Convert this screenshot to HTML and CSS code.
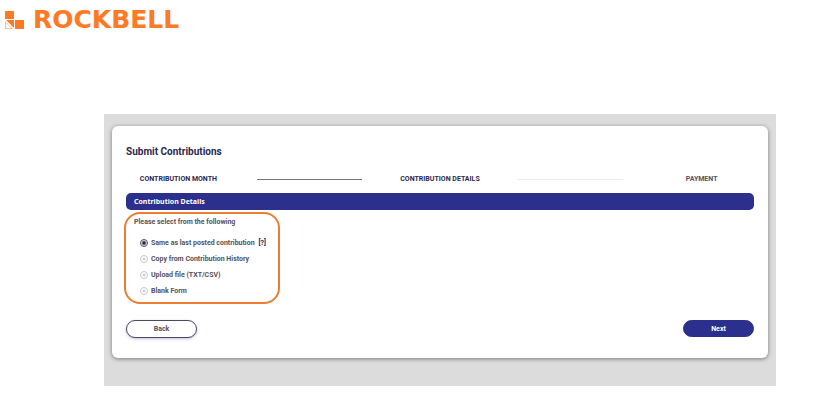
FILE: index.html
```html
<!DOCTYPE html>
<html lang="en">
<head>
    <meta charset="UTF-8">
    <meta name="viewport" content="width=device-width, initial-scale=1.0">
    <title>Submit Contributions</title>
    <link rel="stylesheet" href="styles.css">
</head>
<body>
    <header class="brand">
        <svg class="brand-mark" viewBox="0 0 19 18" aria-hidden="true">
            <path d="M0 0h9v8H0z M10 9h9v9h-9z M1 9h8v8z" fill="#ff7a24"/>
            <path d="M0 10v8h8z" fill="#ffb98c"/>
            <path d="M1 12v5h5z" fill="#fff"/>
        </svg>
        <span class="brand-name">ROCKBELL</span>
    </header>

    <main class="backdrop">
        <form class="card">
            <h1>Submit Contributions</h1>

            <!-- Progress steps -->
            <div class="steps">
                <span class="step">CONTRIBUTION MONTH</span>
                <span class="line done"></span>
                <span class="step">CONTRIBUTION DETAILS</span>
                <span class="line"></span>
                <span class="step upcoming">PAYMENT</span>
            </div>

            <h2>Contribution Details</h2>

            <!-- Source of the contribution data -->
            <fieldset class="options">
                <legend>Please select from the following</legend>
                <div class="option">
                    <input type="radio" name="source" id="same" checked>
                    <label for="same">Same as last posted contribution</label>
                    <a href="#" class="help">[?]</a>
                </div>
                <div class="option">
                    <input type="radio" name="source" id="copy">
                    <label for="copy">Copy from Contribution History</label>
                </div>
                <div class="option">
                    <input type="radio" name="source" id="upload">
                    <label for="upload">Upload file (TXT/CSV)</label>
                </div>
                <div class="option">
                    <input type="radio" name="source" id="blank">
                    <label for="blank">Blank Form</label>
                </div>
            </fieldset>

            <div class="actions">
                <button type="button" class="btn back">Back</button>
                <button type="button" class="btn next">Next</button>
            </div>
        </form>
    </main>
</body>
</html>
```
FILE: styles.css
```css
* {
    box-sizing: border-box;
}

body {
    margin: 0;
    background: #fff;
    font-family: Roboto, Arial, sans-serif;
    color: #55525c;
}

/* Logo */
.brand {
    display: flex;
    align-items: center;
    gap: 9px;
    height: 40px;
    padding-left: 5px;
}

.brand-mark {
    width: 19px;
    height: 18px;
}

.brand-name {
    font-family: "DejaVu Sans", sans-serif;
    font-size: 25px;
    line-height: 24px;
    font-weight: bold;
    color: #ff7a24;
}

/* Grey area behind the card */
.backdrop {
    margin: 74px 39px 14px 104px;
    padding: 12px 8px 28px;
    background: #dcdcdc;
}

.card {
    padding: 20px 14px;
    background: #fff;
    border-radius: 6px;
    box-shadow: 0 1px 4px rgba(0, 0, 0, 0.45);
}

h1 {
    margin: 0 0 15px;
    font-size: 10px;
    line-height: 12px;
    color: #2b2850;
}

/* Steps */
.steps {
    display: grid;
    grid-template-columns: repeat(5, 1fr);
    gap: 26px;
    align-items: center;
    margin-bottom: 8px;
}

.step {
    font-size: 7px;
    line-height: 12px;
    font-weight: bold;
    text-align: center;
    white-space: nowrap;
    color: #2b2850;
}

.step.upcoming {
    color: #55525c;
}

.line {
    height: 1px;
    background: #ececec;
}

.line.done {
    background: #77757c;
}

h2 {
    margin: 0 0 2px;
    padding: 0 8px;
    border-radius: 5px;
    background: #2d2f8c;
    font-family: "Noto Sans", sans-serif;
    font-size: 7px;
    line-height: 17px;
    color: #fff;
}

/* Options */
.options {
    width: 156px;
    margin: 0 0 16px -2px;
    padding: 2px 8px 3px;
    border: 2px solid #ed7d31;
    border-radius: 16px;
    font-size: 7px;
    font-weight: bold;
}

.options legend {
    float: left;
    width: 100%;
    margin-bottom: 7px;
    padding: 0;
    line-height: 12px;
    white-space: nowrap;
}

.option {
    display: flex;
    align-items: center;
    clear: both;
    height: 16px;
    padding-left: 6px;
    white-space: nowrap;
}

.option input {
    appearance: none;
    flex: none;
    width: 8px;
    height: 8px;
    margin: 0 3px 0 0;
    border: 1px solid #c9c9cc;
    border-radius: 50%;
    background: radial-gradient(circle, #d0d0d3 1px, #fff 2px);
}

.option input:checked {
    border-color: #55525c;
    background: radial-gradient(circle, #2b2850 1px, #fff 3px);
}

.help {
    margin-left: 4px;
    color: #2b2850;
    text-decoration: none;
}

/* Buttons */
.actions {
    display: flex;
    justify-content: space-between;
    align-items: flex-start;
}

.btn {
    width: 71px;
    height: 18px;
    padding: 0;
    border-radius: 9px;
    font-family: Roboto, sans-serif;
    font-size: 7px;
    font-weight: bold;
}

.back {
    border: 1px solid #4c4960;
    background: #fff;
    color: #55525c;
    box-shadow: 0 1px 3px rgba(45, 47, 140, 0.3);
}

.next {
    height: 17px;
    border: 1px solid #2d2f8c;
    background: #2d2f8c;
    color: #fff;
}
```
